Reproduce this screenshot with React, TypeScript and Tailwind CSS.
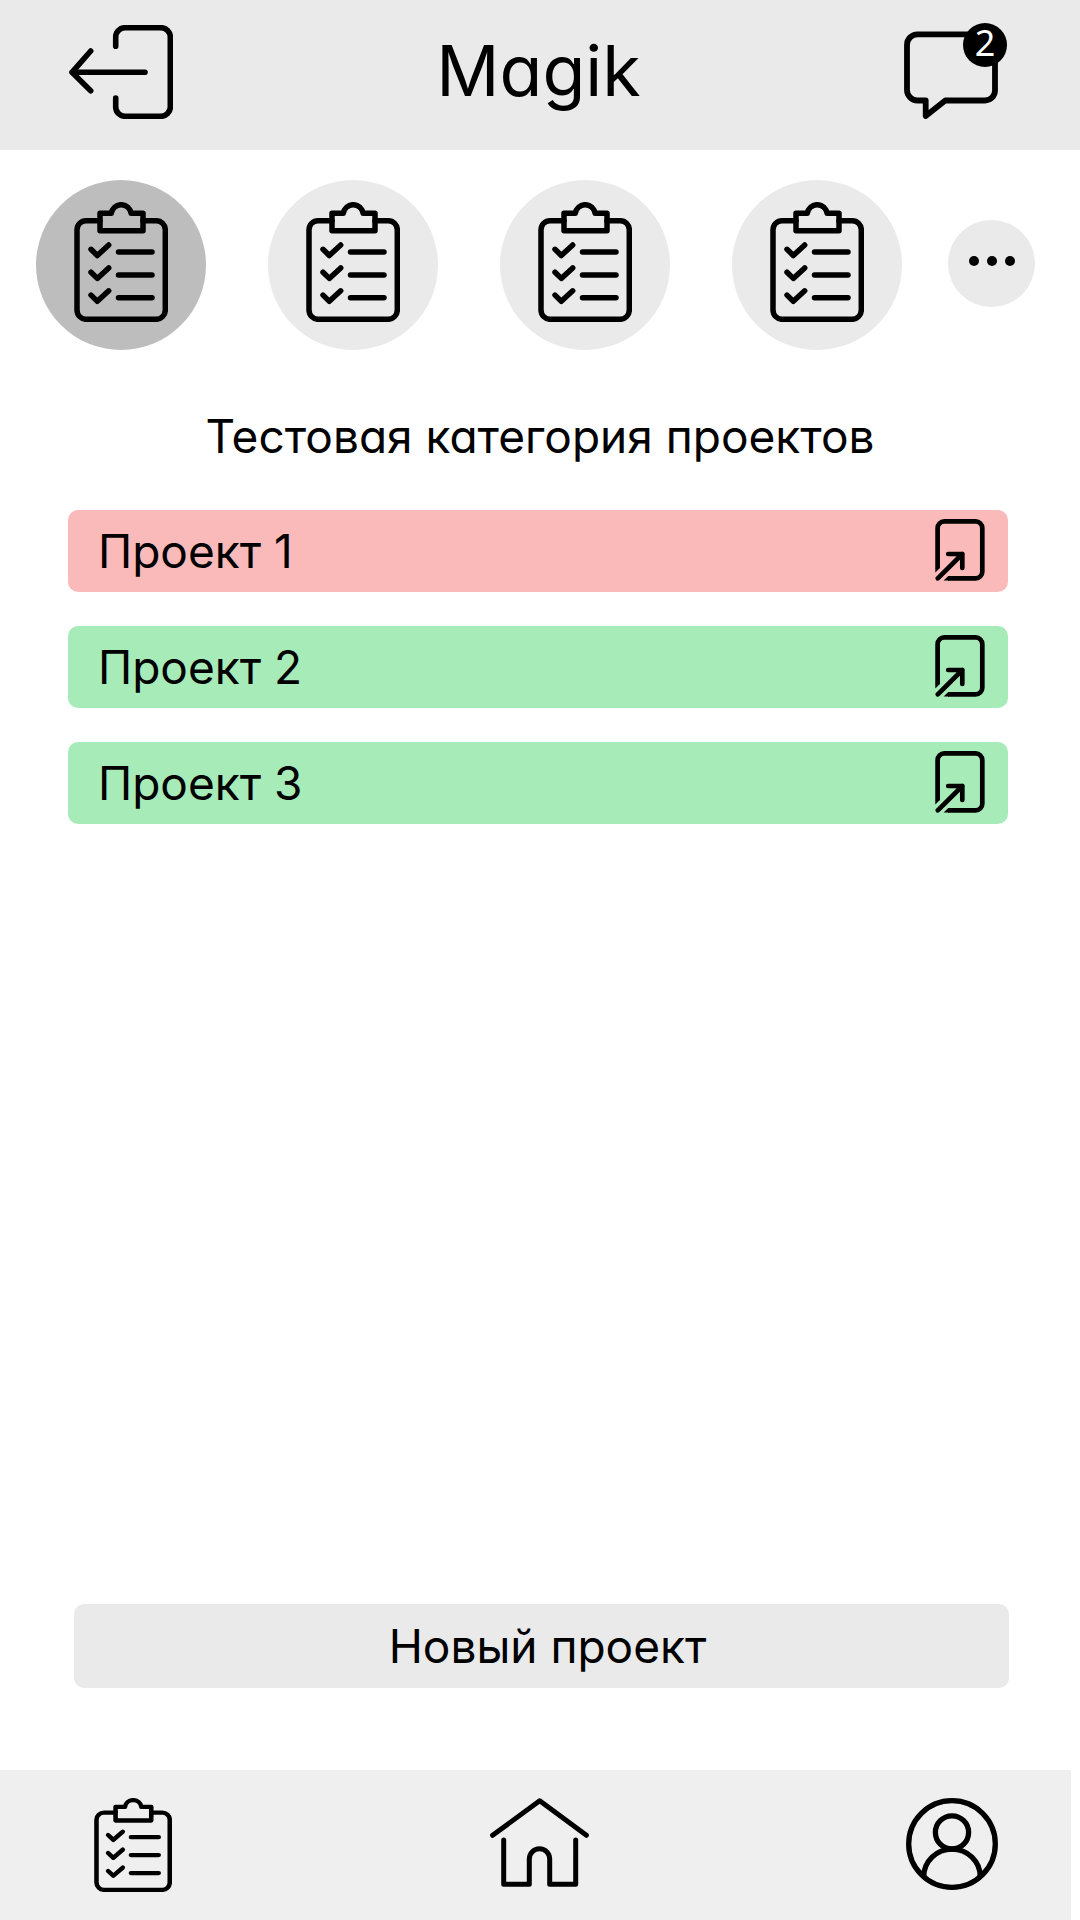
import React from "react";

function ExitIcon() {
  return (
    <svg width="104" height="94" viewBox="0 0 104 94" fill="none" stroke="#000" strokeWidth="5.6" strokeLinecap="round" strokeLinejoin="round" aria-hidden="true">
      <path d="M46.7 21.3V12a9.3 9.3 0 0 1 9.3-9.3H92a9.3 9.3 0 0 1 9.3 9.3V82a9.3 9.3 0 0 1-9.3 9.3H56A9.3 9.3 0 0 1 46.7 82V73" />
      <path d="M76 47.3H3M21.7 26 3 47.3 21.7 65.7" />
    </svg>
  );
}

function ChatIcon() {
  return (
    <svg width="94" height="88" viewBox="0 0 94 88" fill="none" stroke="#000" strokeWidth="5.8" strokeLinecap="round" strokeLinejoin="round" aria-hidden="true">
      <path d="M13.5 3.3H81A10 10 0 0 1 91 13.3V59.5A10 10 0 0 1 81 69.5H41.3L21.7 85V69.5H13.5A10.5 10.5 0 0 1 3 59V13.8A10.5 10.5 0 0 1 13.5 3.3Z" />
    </svg>
  );
}

function ClipboardIcon({ className }: { className: string }) {
  return (
    <svg className={className} viewBox="0 0 94 120" preserveAspectRatio="none" fill="none" stroke="#000" strokeWidth="5.5" strokeLinecap="round" strokeLinejoin="round" aria-hidden="true">
      <path d="M26 18.7H12A9 9 0 0 0 3 27.7V108a9.3 9.3 0 0 0 9.3 9.3H82a9.3 9.3 0 0 0 9.3-9.3V27.7a9 9 0 0 0-9-9H69" />
      <path d="M26 11.3H37.3C38 6.5 42 2.7 47.2 2.7S56.4 6.5 57.1 11.3H69V28.7H26Z" />
      <path d="M17 47.3 23.3 53.5 34.7 43M17 70.2 23.3 76.4 34.7 65.9M17 93.1 23.3 99.3 34.7 88.8" />
      <path d="M44.5 50H78M44.5 72.9H78M44.5 95.8H78" />
    </svg>
  );
}

function OpenIcon() {
  return (
    <svg width="50" height="62" viewBox="0 0 50 62" fill="none" stroke="#000" strokeWidth="4.7" strokeLinejoin="round" aria-hidden="true">
      <path d="M2.6 49.2V9a6.6 6.6 0 0 1 6.6-6.6H40.7A6.6 6.6 0 0 1 47.3 9V52.7a6.6 6.6 0 0 1-6.6 6.6H13" />
      <path d="M.3 49H4.9L.3 53.6ZM13.2 57H14V61.6H8.6Z" fill="#000" stroke="none" />
      <path d="M2.8 59.3 27.3 35M13.2 35H27.3V49" strokeLinecap="round" />
    </svg>
  );
}

function HomeIcon() {
  return (
    <svg width="99" height="90" viewBox="0 0 99 90" fill="none" stroke="#000" strokeWidth="5" strokeLinecap="round" strokeLinejoin="round" aria-hidden="true">
      <path d="M2.6 37.3 49.7 2.8 96.4 37.3" />
      <path d="M13.7 42V86.3H39.3V61A10.2 10.2 0 0 1 59.7 61V86.3H85.7V42" />
    </svg>
  );
}

function UserIcon() {
  return (
    <svg width="92" height="92" viewBox="0 0 92 92" fill="none" stroke="#000" strokeWidth="5.3" aria-hidden="true">
      <circle cx="46" cy="46" r="43.3" />
      <circle cx="46" cy="34.4" r="16.6" />
      <path d="M17.8 78.5A28.2 27.4 0 0 1 74.2 78.5" />
    </svg>
  );
}

const categories = [
  { name: "Категория 1", color: "bg-[#bdbdbd]" },
  { name: "Категория 2", color: "bg-[#eaeaea]" },
  { name: "Категория 3", color: "bg-[#eaeaea]" },
  { name: "Категория 4", color: "bg-[#eaeaea]" },
];

const projects = [
  { name: "Проект 1", color: "bg-[#fababa]" },
  { name: "Проект 2", color: "bg-[#a7ebb9]" },
  { name: "Проект 3", color: "bg-[#a7ebb9]" },
];

export default function App() {
  return (
    <div className="flex min-h-screen flex-col bg-white font-['Inter',sans-serif] text-black [font-feature-settings:'cv11','ss03']">
      <header className="flex items-end justify-between bg-[#eaeaea] pt-[23px] pr-[73px] pb-[31px] pl-[69px]">
        <button type="button" aria-label="Выйти">
          <ExitIcon />
        </button>
        <h1 className="self-center text-[70px] leading-[90px]">Magik</h1>
        <button type="button" aria-label="Сообщения" className="relative pt-2 pr-[9px]">
          <ChatIcon />
          <span className="absolute top-0 right-0 flex size-11 items-center justify-center rounded-full bg-black pb-1 font-['Noto_Sans',sans-serif] text-[36px] leading-[40px] text-white">
            2
          </span>
        </button>
      </header>

      <main className="flex flex-1 flex-col">
        <nav className="flex items-center gap-[46px] pt-[30px] pr-[45px] pl-9">
          <div className="flex flex-1 justify-between">
            {categories.map((c) => (
              <button key={c.name} type="button" aria-label={c.name} className={`flex size-[170px] items-center justify-center rounded-full pb-1.5 ${c.color}`}>
                <ClipboardIcon className="h-[120px] w-[94px]" />
              </button>
            ))}
          </div>
          <button type="button" aria-label="Ещё" className="mb-1 flex size-[87px] items-center justify-center gap-2 rounded-full bg-[#eaeaea] pb-1">
            <span className="size-[10px] rounded-full bg-black" />
            <span className="size-[10px] rounded-full bg-black" />
            <span className="size-[10px] rounded-full bg-black" />
          </button>
        </nav>

        <h2 className="mt-14 text-center text-[46px] leading-[60px]">Тестовая категория проектов</h2>

        <ul className="mt-11 flex flex-col gap-[34px] pr-[72px] pl-[68px]">
          {projects.map((p) => (
            <li key={p.name}>
              <button type="button" className={`flex h-[82px] w-full items-center justify-between rounded-[10px] pr-[23px] pb-[2px] pl-[30px] text-left text-[46px] leading-[60px] ${p.color}`}>
                <span className="pt-[2px]">{p.name}</span>
                <OpenIcon />
              </button>
            </li>
          ))}
        </ul>

        <div className="mt-auto pr-[71px] pb-[82px] pl-[74px]">
          <button type="button" className="h-[84px] w-full rounded-[10px] bg-[#eaeaea] pl-3 text-[46px] leading-[60px]">
            Новый проект
          </button>
        </div>
      </main>

      <footer className="mr-[9px] flex items-start justify-between bg-[#efefef] pt-7 pr-[73px] pb-[28px] pl-[94px]">
        <button type="button" aria-label="Проекты">
          <ClipboardIcon className="h-[94px] w-[78px]" />
        </button>
        <button type="button" aria-label="Главная">
          <HomeIcon />
        </button>
        <button type="button" aria-label="Профиль">
          <UserIcon />
        </button>
      </footer>
    </div>
  );
}
